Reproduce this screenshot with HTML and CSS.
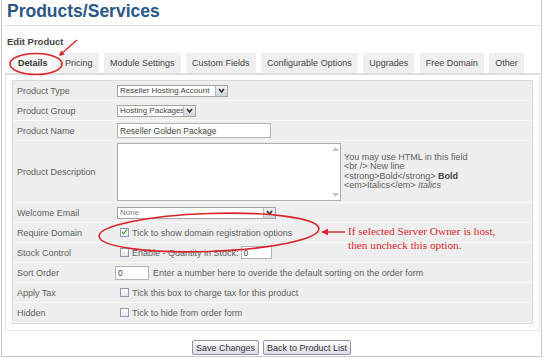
FILE: index.html
```html
<!DOCTYPE html>
<html lang="en">
<head>
  <meta charset="UTF-8" />
  <title>Products/Services</title>
  <link rel="stylesheet" href="styles.css">
</head>
<body>
  <div class="frame">
    <h1 class="page-title">Products/Services</h1>
    <div class="sub-title">Edit Product</div>

    <div class="tab-bar">
      <button class="active">Details</button>
      <button>Pricing</button>
      <button>Module Settings</button>
      <button>Custom Fields</button>
      <button>Configurable Options</button>
      <button>Upgrades</button>
      <button>Free Domain</button>
      <button>Other</button>
    </div>

    <div class="tab-box">
      <div class="form">
        <div class="row">
          <div class="label">Product Type</div>
          <div class="field">
            <span class="select select-type">
              <select><option>Reseller Hosting Account</option></select>
              <span class="select-btn"><svg width="7" height="5" viewBox="0 0 7 5"><path d="M1 1 L3.5 4 L6 1" fill="none" stroke="#333" stroke-width="1.6"/></svg></span>
            </span>
          </div>
        </div>
        <div class="row">
          <div class="label">Product Group</div>
          <div class="field">
            <span class="select select-group">
              <select><option>Hosting Packages</option></select>
              <span class="select-btn"><svg width="7" height="5" viewBox="0 0 7 5"><path d="M1 1 L3.5 4 L6 1" fill="none" stroke="#333" stroke-width="1.6"/></svg></span>
            </span>
          </div>
        </div>
        <div class="row">
          <div class="label">Product Name</div>
          <div class="field">
            <input class="text text-name" value="Reseller Golden Package" />
          </div>
        </div>
        <div class="row row-desc">
          <div class="label">Product Description</div>
          <div class="field">
            <div class="textarea">
              <textarea></textarea>
              <div class="scroll">
                <svg width="7" height="4" viewBox="0 0 7 4"><path d="M0 4 L3.5 0 L7 4 Z" fill="#c4c8cc"/></svg>
                <svg width="7" height="4" viewBox="0 0 7 4"><path d="M0 0 L3.5 4 L7 0 Z" fill="#c4c8cc"/></svg>
              </div>
            </div>
            <div class="help">
              You may use HTML in this field<br>
              &lt;br /&gt; New line<br>
              &lt;strong&gt;Bold&lt;/strong&gt; <strong>Bold</strong><br>
              &lt;em&gt;Italics&lt;/em&gt; <em>Italics</em>
            </div>
          </div>
        </div>
        <div class="row">
          <div class="label">Welcome Email</div>
          <div class="field">
            <span class="select select-email">
              <select class="muted"><option>None</option></select>
              <span class="select-btn"><svg width="7" height="5" viewBox="0 0 7 5"><path d="M1 1 L3.5 4 L6 1" fill="none" stroke="#333" stroke-width="1.6"/></svg></span>
            </span>
          </div>
        </div>
        <div class="row">
          <div class="label">Require Domain</div>
          <div class="field">
            <input type="checkbox" checked /> Tick to show domain registration options
          </div>
        </div>
        <div class="row">
          <div class="label">Stock Control</div>
          <div class="field">
            <input type="checkbox" /> Enable - Quantity in Stock:
            <input class="text text-stock" value="0" />
          </div>
        </div>
        <div class="row">
          <div class="label">Sort Order</div>
          <div class="field">
            <input class="text text-sort" value="0" />
            <span class="hint">Enter a number here to overide the default sorting on the order form</span>
          </div>
        </div>
        <div class="row">
          <div class="label">Apply Tax</div>
          <div class="field">
            <input type="checkbox" /> Tick this box to charge tax for this product
          </div>
        </div>
        <div class="row">
          <div class="label">Hidden</div>
          <div class="field">
            <input type="checkbox" /> Tick to hide from order form
          </div>
        </div>
      </div>
    </div>

    <div class="actions">
      <button>Save Changes</button>
      <button>Back to Product List</button>
    </div>
  </div>

  <!-- red markup drawn on top of the screenshot -->
  <svg class="marks" width="545" height="358" viewBox="0 0 545 358">
    <ellipse cx="36" cy="64" rx="26" ry="10.5" fill="none" stroke="#d9232b" stroke-width="1.6"/>
    <line x1="77" y1="40" x2="62.5" y2="52.8" stroke="#d9232b" stroke-width="1.4"/>
    <polygon points="59,56 64.6,54.6 61.1,50.6" fill="#d9232b"/>
    <ellipse cx="209" cy="232.5" rx="110" ry="19" fill="none" stroke="#d9232b" stroke-width="1.6" transform="rotate(-2 209 232.5)"/>
    <line x1="345" y1="232" x2="327" y2="232" stroke="#d9232b" stroke-width="1.4"/>
    <polygon points="321,232 328,228.8 328,235.2" fill="#d9232b"/>
  </svg>
  <div class="note">If selected Server Owner is host,<br>then uncheck this option.</div>
</body>
</html>
```

FILE: styles.css
```css
body {
  margin: 0;
  font-family: "Liberation Sans", Arial, sans-serif;
  font-size: 9px;
  color: #5e5e5e;
  background-color: #fff;
  position: relative;
}

.frame {
  box-sizing: border-box;
  width: 541px;
  height: 357px;
  margin-left: 1px;
  border: 1px solid #c9c9c9;
  border-top: 0;
}

.page-title {
  margin: 0 1px 0 3px;
  padding: 0 0 3px 2px;
  font-size: 17.5px;
  line-height: 22px;
  color: #2b5787;
  border-bottom: 1px solid #dedede;
}

.sub-title {
  margin: 10px 0 0 5px;
  font-size: 9.5px;
  line-height: 12px;
  font-weight: bold;
  color: #444;
}

.tab-bar {
  display: flex;
  gap: 5.5px;
  margin: 5px 1px 0 3px;
  padding-left: 7px;
  border-bottom: 2px solid #dddddd;
}

.tab-bar button {
  height: 20px;
  padding: 0 6px;
  border: none;
  background-color: #efefef;
  font-family: inherit;
  font-size: 9px;
  color: #444;
}

.tab-bar button.active {
  background-color: #f9f9f9;
  font-weight: bold;
  color: #333;
}

.tab-box {
  margin: 0 1px 0 3px;
  padding: 5px 6px 6px;
  border: 1px solid #e6e6e6;
  border-top: 0;
}

.form {
  background-color: #eeeeee;
  border: 1px solid #d9d9d9;
}

.row {
  display: flex;
  align-items: center;
  box-sizing: border-box;
  height: 20px;
  border-bottom: 1px solid #fafafa;
}

.row-desc {
  height: 62px;
}

.label {
  box-sizing: border-box;
  width: 102px;
  padding-left: 4px;
}

.field {
  flex: 1;
  display: flex;
  align-items: center;
  white-space: nowrap;
}

.select {
  display: inline-flex;
  box-sizing: border-box;
  height: 12px;
  margin-left: 2px;
  border: 1px solid #a5a5a5;
  background-color: #fff;
}

.select select {
  flex: 1;
  min-width: 0;
  height: 10px;
  padding: 0 0 0 2px;
  border: none;
  background: transparent;
  appearance: none;
  font-family: inherit;
  font-size: 8px;
  line-height: 10px;
  color: #444;
}

.select select.muted {
  color: #777;
}

.select-btn {
  display: flex;
  align-items: center;
  justify-content: center;
  width: 11px;
  border-left: 1px solid #b8b8b8;
  background: linear-gradient(#f2f4f8, #cdd4de);
}

.select-type { width: 111px; }
.select-group { width: 79px; }
.select-email { width: 159px; }

.text {
  box-sizing: border-box;
  padding: 0 2px;
  border: 1px solid #b5b5b5;
  background-color: #fff;
  font-family: inherit;
  font-size: 8.5px;
  color: #444;
}

.text-name {
  width: 154px;
  height: 15px;
  margin-left: 2px;
}

.text-stock {
  width: 31px;
  height: 13px;
  margin-left: 2px;
}

.text-sort {
  width: 34px;
  height: 14px;
}

.hint {
  margin-left: 4px;
}

input[type="checkbox"] {
  appearance: none;
  position: relative;
  box-sizing: border-box;
  width: 9px;
  height: 9px;
  margin: 0 3px 0 5px;
  border: 1px solid #8c9cb2;
  background: linear-gradient(#fff, #e4e7ec);
}

input[type="checkbox"]:checked::after {
  content: "";
  position: absolute;
  left: 2px;
  top: -1px;
  width: 2px;
  height: 5px;
  border: solid #2f9b2f;
  border-width: 0 1.6px 1.6px 0;
  transform: rotate(40deg);
}

.textarea {
  display: flex;
  box-sizing: border-box;
  width: 224px;
  height: 58px;
  margin-left: 2px;
  border: 1px solid #adadad;
  background-color: #fff;
}

.textarea textarea {
  flex: 1;
  border: none;
  resize: none;
  outline: none;
}

.scroll {
  display: flex;
  flex-direction: column;
  justify-content: space-between;
  align-items: center;
  width: 9px;
  padding: 3px 0;
}

.help {
  margin-left: 3px;
  line-height: 9.5px;
}

.help strong {
  color: #444;
}

.actions {
  display: flex;
  justify-content: center;
  gap: 4px;
  margin-top: 9px;
}

.actions button {
  height: 15px;
  padding: 0 3px;
  border: 1px solid #8e93ab;
  border-radius: 2px;
  background: linear-gradient(#fbfbfd, #dcdde8);
  font-family: inherit;
  font-size: 9px;
  color: #333;
}

.marks {
  position: absolute;
  left: 0;
  top: 0;
  pointer-events: none;
}

.note {
  position: absolute;
  left: 348px;
  top: 224px;
  font-family: "Liberation Serif", "Times New Roman", serif;
  font-size: 11.3px;
  line-height: 14px;
  color: #d9262d;
  white-space: nowrap;
}
```
